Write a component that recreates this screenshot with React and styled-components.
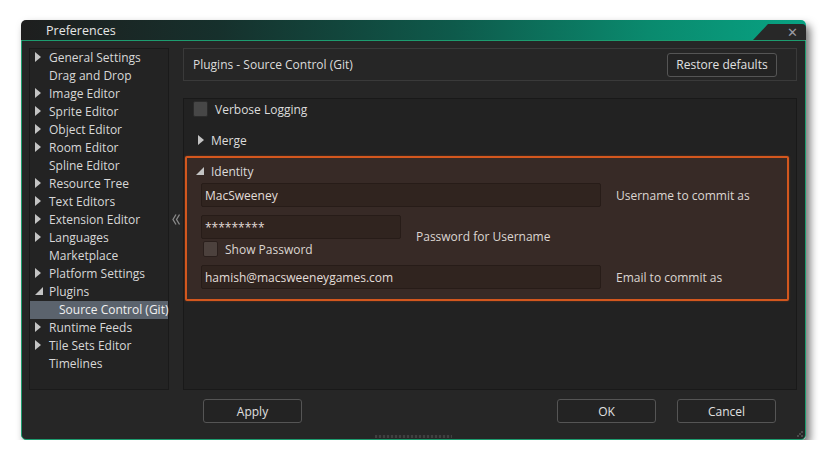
import React from 'react';
import styled, { createGlobalStyle } from 'styled-components';

const GlobalStyle = createGlobalStyle`
  body {
    margin: 0;
    background: #ffffff;
    font-family: "Open Sans", "Noto Sans", sans-serif;
    font-size: 12px;
    color: #d8d8d8;
  }
`;

const Page = styled.div`
  padding: 20px 0 0 21px;
`;

const Window = styled.div`
  width: 785px;
  height: 420px;
  display: flex;
  flex-direction: column;
  border-radius: 5px;
  box-shadow: 4px 5px 9px rgba(0, 0, 0, 0.55);
`;

const TitleBar = styled.div`
  position: relative;
  height: 20px;
  flex: none;
  display: flex;
  align-items: center;
  padding-left: 25px;
  border-radius: 5px 5px 0 0;
  background: linear-gradient(90deg, #1e1e1e 0%, #16302c 25%, #0e5a4b 55%, #0a8a6e 80%, #08a383 100%);
  color: #e6e6e6;
  font-size: 12.5px;
`;

const TitleTab = styled.div`
  position: absolute;
  right: 0;
  top: 4px;
  width: 53px;
  height: 16px;
  background: #282828;
  clip-path: polygon(15px 0, 100% 0, 100% 100%, 0 100%);
  border-top-right-radius: 4px;
  display: flex;
  align-items: center;
  justify-content: flex-end;
  padding-right: 8px;
  box-sizing: border-box;
  color: #9a9aa2;
  font-size: 13px;
`;

const Body = styled.div`
  position: relative;
  flex: 1;
  background: #262626;
  border: 1px solid #1d9c6f;
  border-radius: 0 0 5px 5px;
  padding: 7px 8px 0 7px;
  display: grid;
  grid-template-columns: 140px 14px 1fr;
  grid-template-rows: 342px auto;
`;

const Sidebar = styled.div`
  background: #232323;
  border: 1px solid #1a1a1a;
  box-sizing: border-box;
  display: flex;
  flex-direction: column;
`;

const TreeRow = styled.div`
  height: 18px;
  box-sizing: border-box;
  padding-bottom: 2px;
  display: flex;
  align-items: center;
  padding-left: ${({ $child }) => ($child ? 29 : 5)}px;
  background: ${({ $selected }) => ($selected ? '#5b636d' : 'transparent')};
  color: ${({ $selected }) => ($selected ? '#f0f0f0' : '#d8d8d8')};
  white-space: nowrap;
`;

const ArrowSlot = styled.span`
  width: ${({ $hide }) => ($hide ? 0 : 14)}px;
  display: flex;
  align-items: center;
`;

const Collapse = styled.div`
  display: flex;
  align-items: center;
  justify-content: center;
`;

const RightColumn = styled.div`
  display: flex;
  flex-direction: column;
  gap: 17px;
`;

const Header = styled.div`
  height: 33px;
  box-sizing: border-box;
  border: 1px solid #3a3a3a;
  display: flex;
  align-items: center;
  justify-content: space-between;
  padding: 0 19px 0 9px;
  color: #dcdcdc;
`;

const Button = styled.button`
  width: ${({ $w }) => $w || 99}px;
  height: 24px;
  box-sizing: border-box;
  background: #232323;
  border: 1px solid #555555;
  border-radius: 3px;
  color: #e0e0e0;
  font-family: inherit;
  font-size: 12px;
  padding: 0;
`;

const Panel = styled.div`
  flex: 1;
  background: #222222;
  border: 1px solid #191919;
  display: flex;
  flex-direction: column;
`;

const CheckRow = styled.div`
  height: 20px;
  display: flex;
  align-items: center;
  gap: 7px;
  padding-left: 9px;
  color: #dcdcdc;
`;

const Check = styled.span`
  width: 15px;
  height: 16px;
  box-sizing: border-box;
  border-radius: 2px;
  background: ${({ $brown }) => ($brown ? '#4c413d' : '#474747')};
  border: 1px solid ${({ $brown }) => ($brown ? '#2a1f1c' : '#2b2b2b')};
`;

const Group = styled.div`
  height: ${({ $h }) => $h || 20}px;
  display: flex;
  align-items: center;
  padding-left: ${({ $pad }) => $pad}px;
  margin-top: ${({ $top }) => $top || 0}px;
  gap: 7px;
  color: #dcdcdc;
`;

const Identity = styled.div`
  margin: 6px 7px 0 1px;
  border: 2px solid #d3571e;
  border-radius: 2px;
  background: #372a26;
  padding: 4px 0 10px 0;
  box-shadow: 0 0 2px rgba(211, 87, 30, 0.5);
`;

const Fields = styled.div`
  margin-top: 3px;
  padding-left: 14px;
  display: grid;
  grid-template-columns: 400px 1fr;
  column-gap: 15px;
  row-gap: 8px;
  align-items: center;
  color: #dcd6d2;
`;

const Input = styled.div`
  width: ${({ $w }) => $w}px;
  height: 24px;
  box-sizing: border-box;
  background: #30241f;
  border: 1px solid #271c18;
  border-radius: 2px;
  padding-left: 3px;
  display: flex;
  align-items: center;
  color: #e2ddd9;
`;

const PasswordBlock = styled.div`
  display: flex;
  align-items: flex-start;
  gap: 15px;
  grid-column: 1 / 3;
`;

const PasswordCol = styled.div`
  display: flex;
  flex-direction: column;
  gap: 2px;
`;

const ShowRow = styled.div`
  display: flex;
  align-items: center;
  gap: 7px;
  padding-left: 2px;
  height: 16px;
`;

const PasswordLabel = styled.div`
  align-self: center;
  padding-top: 1px;
`;

const Footer = styled.div`
  grid-column: 3;
  margin-top: 9px;
  display: flex;
  gap: 21px;
  padding: 0 21px 0 20px;
`;

const Spacer = styled.div`
  flex: 1;
`;

const Grip = styled.div`
  position: absolute;
  bottom: 1px;
  left: 353px;
  width: 77px;
  height: 3px;
  background: repeating-linear-gradient(90deg, #404040 0 2px, #2a2a2a 2px 4px);
`;

const Resize = styled.svg`
  position: absolute;
  right: 2px;
  bottom: 2px;
`;

const Right = () => (
  <svg width="6" height="10" viewBox="0 0 6 10">
    <polygon points="0,0 6,5 0,10" fill="#c4c4c4" />
  </svg>
);

const Down = () => (
  <svg width="8" height="8" viewBox="0 0 8 8">
    <polygon points="8,0 8,8 0,8" fill="#c4c4c4" />
  </svg>
);

const tree = [
  ['General Settings', 'r'],
  ['Drag and Drop'],
  ['Image Editor', 'r'],
  ['Sprite Editor', 'r'],
  ['Object Editor', 'r'],
  ['Room Editor', 'r'],
  ['Spline Editor'],
  ['Resource Tree', 'r'],
  ['Text Editors', 'r'],
  ['Extension Editor', 'r'],
  ['Languages', 'r'],
  ['Marketplace'],
  ['Platform Settings', 'r'],
  ['Plugins', 'd'],
  ['Source Control (Git)', 'child'],
  ['Runtime Feeds', 'r'],
  ['Tile Sets Editor', 'r'],
  ['Timelines'],
];

export default function App() {
  return (
    <Page>
      <GlobalStyle />
      <Window>
        <TitleBar>
          Preferences
          <TitleTab>✕</TitleTab>
        </TitleBar>
        <Body>
          <Sidebar>
            {tree.map(([label, kind]) => (
              <TreeRow key={label} $child={kind === 'child'} $selected={kind === 'child'}>
                <ArrowSlot $hide={kind === 'child'}>
                  {kind === 'r' && <Right />}
                  {kind === 'd' && <Down />}
                </ArrowSlot>
                {label}
              </TreeRow>
            ))}
          </Sidebar>
          <Collapse>
            <svg width="8" height="11" viewBox="0 0 8 11">
              <polyline points="4,0.5 1,5.5 4,10.5" fill="none" stroke="#8a8a8a" strokeWidth="1.3" />
              <polyline points="7.5,0.5 4.5,5.5 7.5,10.5" fill="none" stroke="#8a8a8a" strokeWidth="1.3" />
            </svg>
          </Collapse>
          <RightColumn>
            <Header>
              Plugins - Source Control (Git)
              <Button $w={110}>Restore defaults</Button>
            </Header>
            <Panel>
              <CheckRow>
                <Check />
                Verbose Logging
              </CheckRow>
              <Group $pad={14} $top={11}>
                <Right />
                Merge
              </Group>
              <Identity>
                <Group $pad={9} $h={18}>
                  <Down />
                  Identity
                </Group>
                <Fields>
                  <Input $w={400}>MacSweeney</Input>
                  <div>Username to commit as</div>
                  <PasswordBlock>
                    <PasswordCol>
                      <Input $w={200}>*********</Input>
                      <ShowRow>
                        <Check $brown />
                        Show Password
                      </ShowRow>
                    </PasswordCol>
                    <PasswordLabel>Password for Username</PasswordLabel>
                  </PasswordBlock>
                  <Input $w={400}>hamish@macsweeneygames.com</Input>
                  <div>Email to commit as</div>
                </Fields>
              </Identity>
            </Panel>
          </RightColumn>
          <Footer>
            <Button>Apply</Button>
            <Spacer />
            <Button>OK</Button>
            <Button>Cancel</Button>
          </Footer>
          <Grip />
          <Resize width="6" height="6" viewBox="0 0 6 6">
            <rect x="4" y="0" width="2" height="2" fill="#4a4a4a" />
            <rect x="2" y="2" width="2" height="2" fill="#4a4a4a" />
            <rect x="4" y="4" width="2" height="2" fill="#4a4a4a" />
            <rect x="0" y="4" width="2" height="2" fill="#4a4a4a" />
          </Resize>
        </Body>
      </Window>
    </Page>
  );
}
